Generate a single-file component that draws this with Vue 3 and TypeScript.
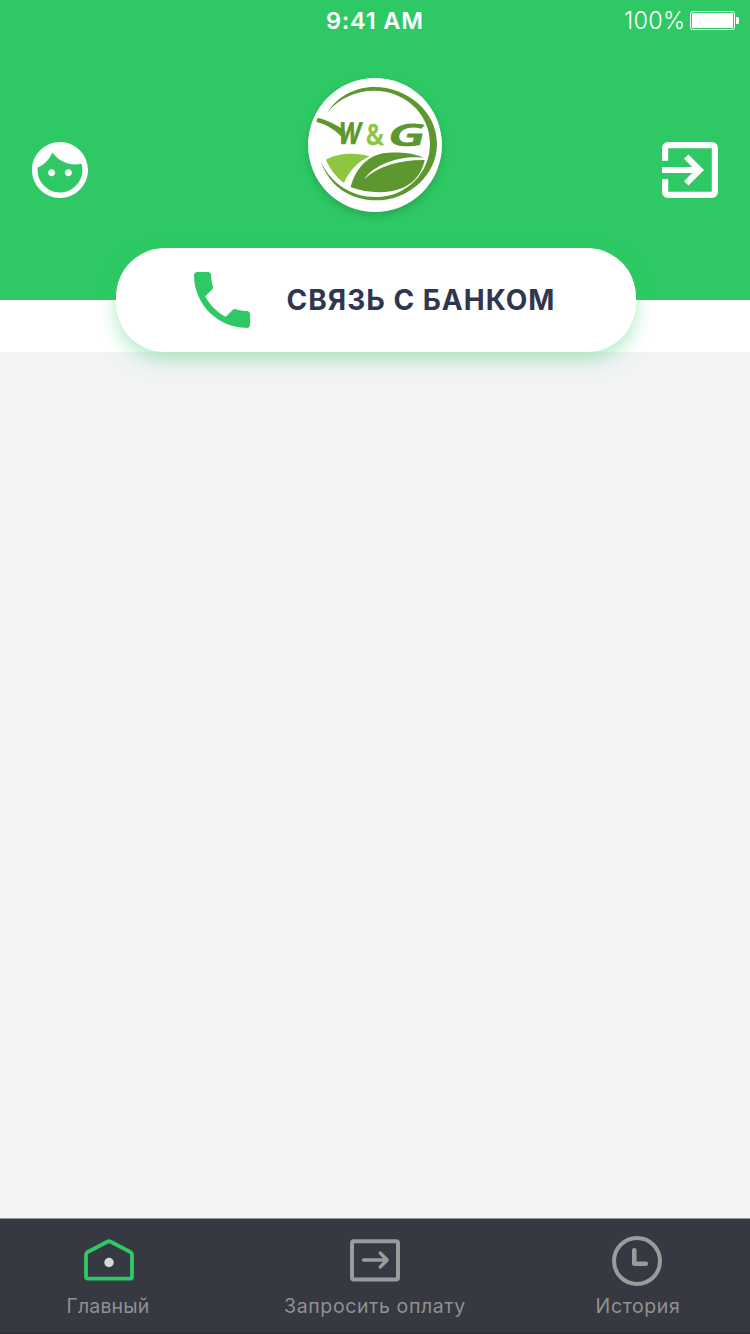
<script setup lang="ts">
interface Tab {
  id: 'home' | 'request' | 'history'
  label: string
}

const tabs: Tab[] = [
  { id: 'home', label: 'Главный' },
  { id: 'request', label: 'Запросить оплату' },
  { id: 'history', label: 'История' },
]
</script>

<template>
  <div class="screen">
    <header class="header">
      <div class="status">
        <span class="time">9:41 AM</span>
        <span class="charge">100%</span>
        <svg class="battery" width="50" height="20" viewBox="0 0 50 20">
          <rect x="0.5" y="0.5" width="44" height="18" rx="2.2" fill="none" stroke="#fff" />
          <rect x="2" y="2" width="41" height="15" rx="0.8" fill="#fff" />
          <path d="M46 6h1.5q1.5 0 1.5 1.5v4q0 1.5-1.5 1.5H46z" fill="#fff" />
        </svg>
      </div>
      <div class="toolbar">
        <button class="tool" aria-label="Профиль">
          <svg width="56" height="56" viewBox="2 2 20 20" fill="#fff">
            <path d="M9 11.75c-.69 0-1.25.56-1.25 1.25s.56 1.25 1.25 1.25 1.25-.56 1.25-1.25-.56-1.25-1.25-1.25zm6 0c-.69 0-1.25.56-1.25 1.25s.56 1.25 1.25 1.25 1.25-.56 1.25-1.25-.56-1.25-1.25-1.25zM12 2C6.48 2 2 6.48 2 12s4.48 10 10 10 10-4.48 10-10S17.52 2 12 2zm0 18c-4.41 0-8-3.59-8-8 0-.29.02-.58.05-.86 2.36-1.05 4.23-2.98 5.21-5.37C11.07 8.33 14.05 10 17.42 10c.78 0 1.53-.09 2.25-.26.21.71.33 1.47.33 2.26 0 4.41-3.59 8-8 8z" />
          </svg>
        </button>
        <div class="logo">
          <svg width="134" height="134" viewBox="24 24 402 402">
            <path d="M82 127C112 80 165 51 222 51C322 51 411 125 411 221C411 316 325 391 229 391C150 391 88 348 63 276C94 342 154 381 229 381C316 381 390 311 390 221C390 130 313 62 222 62C167 62 116 86 82 127Z" fill="#5c982f" />
            <path d="M78 269C113 249 168 246 209 259C173 276 147 303 132 339C108 321 90 297 78 269Z" fill="#8dc63f" />
            <path d="M152 352C166 293 208 249 267 248C307 247 341 250 371 263C298 257 227 281 192 328C235 288 300 269 374 270C367 306 344 338 309 353C261 373 204 370 152 352Z" fill="#5c982f" />
            <path d="M56 144C84 152 112 164 136 184L134 211C110 182 84 165 50 156Q49 145 56 144Z" fill="#5c982f" />
            <text class="brand" transform="translate(112 221) skewX(-10) scale(.75 1)" font-size="90" fill="#5c982f" stroke="#5c982f" stroke-width="2">W</text>
            <text class="brand amp" transform="translate(198 224) scale(.85 1)" font-size="84" fill="#8dc63f" stroke="#8dc63f" stroke-width="2">&amp;</text>
            <text class="brand" transform="translate(256 228) skewX(-14) scale(1.72 1)" font-size="93" fill="#5c982f">G</text>
          </svg>
        </div>
        <button class="tool" aria-label="Выход">
          <svg width="56" height="56" viewBox="3 3 18 18" fill="#fff">
            <path d="M10.09 15.59L11.5 17l5-5-5-5-1.41 1.41L12.67 11H3v2h9.67l-2.58 2.59zM19 3H5c-1.11 0-2 .9-2 2v4h2V5h14v14H5v-4H3v4c0 1.1.89 2 2 2h14c1.1 0 2-.9 2-2V5c0-1.1-.9-2-2-2z" />
          </svg>
        </button>
      </div>
    </header>

    <section class="contact">
      <button class="call">
        <svg width="56" height="56" viewBox="3 3 18 18" fill="#2ec964">
          <path d="M6.62 10.79c1.44 2.83 3.76 5.14 6.59 6.59l2.2-2.2c.27-.27.67-.36 1.02-.24 1.12.37 2.33.57 3.57.57.55 0 1 .45 1 1V20c0 .55-.45 1-1 1-9.39 0-17-7.61-17-17 0-.55.45-1 1-1h3.5c.55 0 1 .45 1 1 0 1.25.2 2.45.57 3.57.11.35.03.74-.25 1.02l-2.2 2.2z" />
        </svg>
        <span>СВЯЗЬ С БАНКОМ</span>
      </button>
    </section>

    <main class="content"></main>

    <nav class="tabs">
      <a v-for="tab in tabs" :key="tab.id" class="tab" :class="tab.id">
        <svg v-if="tab.id === 'home'" width="50" height="50" viewBox="0 0 50 50" fill="none">
          <path d="M2 19Q2 17 3.7 16L23.3 5.7Q25 4.8 26.7 5.7L46.3 16Q48 17 48 19V40.7Q48 42.7 46 42.7H4Q2 42.7 2 40.7Z" class="house" />
          <circle cx="25" cy="26.5" r="4.7" fill="#d8d8d8" />
        </svg>
        <svg v-else-if="tab.id === 'request'" width="50" height="50" viewBox="0 0 50 50" class="line">
          <rect x="2" y="5.3" width="46" height="38.3" rx="1.8" stroke-width="4" />
          <path d="M13.5 24H36.5M30.3 17L37.2 24L30.3 31" stroke-width="3.4" />
        </svg>
        <svg v-else width="50" height="50" viewBox="0 0 50 50" class="line">
          <circle cx="25" cy="25" r="23" stroke-width="4" />
          <path d="M22.3 14.3V27.7H33.8" stroke-width="4.6" />
        </svg>
        <span>{{ tab.label }}</span>
      </a>
    </nav>
  </div>
</template>

<style>
body {
  margin: 0;
}
</style>

<style scoped>
.screen {
  width: 750px;
  height: 1334px;
  display: flex;
  flex-direction: column;
  overflow: hidden;
  background: #f2f3f5;
  font-family: Inter, "Noto Sans", sans-serif;
}
button {
  border: 0;
  padding: 0;
  background: none;
  font: inherit;
}
svg {
  display: block;
  flex: none;
}
.header {
  height: 300px;
  flex: none;
  background: #2ec964;
}
.status {
  height: 40px;
  display: grid;
  grid-template-columns: 326px 298px 66px 50px;
  align-items: center;
  color: #fff;
  line-height: 38px;
}
.time {
  grid-column: 2;
  padding-top: 2px;
  font-size: 23.5px;
  font-weight: 600;
  letter-spacing: 0.8px;
}
.charge {
  padding-top: 2px;
  font-size: 23.5px;
  font-weight: 350;
  letter-spacing: 0.2px;
}
.battery {
  margin-top: 2px;
}
.toolbar {
  display: flex;
  justify-content: space-between;
  padding: 38px 32px 0;
}
.tool {
  margin-top: 64px;
  width: 56px;
  height: 56px;
}
.logo {
  width: 134px;
  height: 134px;
  border-radius: 50%;
  background: #fff;
  box-shadow: 0 4px 8px rgba(0, 0, 0, 0.16);
}
.brand {
  font-family: "Open Sans", Inter, sans-serif;
  font-weight: 700;
}
.amp {
  font-weight: 600;
}
.contact {
  height: 52px;
  flex: none;
  display: flex;
  justify-content: center;
  align-items: flex-end;
  background: #fff;
}
.call {
  width: 520px;
  height: 104px;
  margin-left: 2px;
  padding-left: 78px;
  box-sizing: border-box;
  display: flex;
  align-items: center;
  gap: 36.5px;
  border-radius: 49px;
  background: #fff;
  box-shadow: 0 8px 18px rgba(46, 201, 100, 0.36);
  position: relative;
  color: #303650;
  font-size: 28px;
  font-weight: 650;
  letter-spacing: 1px;
  white-space: nowrap;
}
.content {
  flex: 1;
}
.tabs {
  height: 116px;
  flex: none;
  box-sizing: border-box;
  display: grid;
  grid-template-columns: 218px 314px 218px;
  border-top: 1px solid #97989b;
  border-bottom: 2px solid #303039;
  background: #363842;
}
.tab {
  display: flex;
  flex-direction: column;
  align-items: center;
  padding-top: 17px;
  color: #919191;
  font-size: 19.5px;
  line-height: 24px;
  letter-spacing: 0.6px;
  white-space: nowrap;
}
.tab span {
  margin-top: 8px;
}
.home {
  letter-spacing: 0.15px;
}
.home span {
  margin-right: 2px;
}
.history {
  padding-right: 8px;
}
.history span {
  margin-left: 2px;
}
.house {
  stroke: #2ec964;
  stroke-width: 3.8;
}
.line {
  fill: none;
  stroke: #9b9b9b;
  stroke-linecap: round;
  stroke-linejoin: round;
}
</style>
